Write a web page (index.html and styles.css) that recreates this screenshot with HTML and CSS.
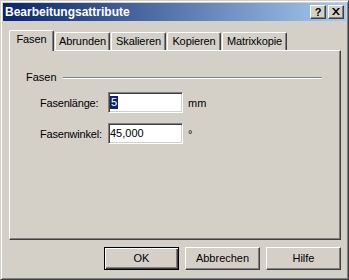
FILE: index.html
```html
<!DOCTYPE html>
<html lang="de">
<head>
<meta charset="utf-8">
<title>Bearbeitungsattribute</title>
<link rel="stylesheet" href="styles.css">
</head>
<body>
<div class="window">
  <div class="titlebar">
    <span class="title">Bearbeitungsattribute</span>
    <span class="tbtn help">?</span>
    <span class="tbtn close"><svg width="8" height="7" viewBox="0 0 8 7"><path d="M0 0h2l2 2.5L6 0h2L5 3.5 8 7H6L4 4.5 2 7H0l3-3.5z" fill="#000"/></svg></span>
  </div>
  <div class="tabs">
    <div class="tab active t1">Fasen</div>
    <div class="tab t2">Abrunden</div>
    <div class="tab t3">Skalieren</div>
    <div class="tab t4">Kopieren</div>
    <div class="tab t5">Matrixkopie</div>
  </div>
  <div class="panel">
    <div class="group">
      <span class="group-label">Fasen</span>
      <span class="group-line"></span>
    </div>
    <div class="form">
      <span class="lbl">Fasenlänge:</span>
      <div class="edit"><span class="sel">5</span></div>
      <span class="unit">mm</span>
      <span class="lbl">Fasenwinkel:</span>
      <div class="edit">45,000</div>
      <span class="unit">°</span>
    </div>
  </div>
  <div class="buttons">
    <div class="btn default"><span class="btn-inner">OK</span></div>
    <div class="btn"><span class="btn-inner">Abbrechen</span></div>
    <div class="btn"><span class="btn-inner">Hilfe</span></div>
  </div>
</div>
</body>
</html>
```
FILE: styles.css
```css
* { box-sizing: border-box; }
html, body { margin: 0; padding: 0; background: #d4d0c8; }
body {
  font-family: "Liberation Sans", Arial, sans-serif;
  font-size: 11px;
  color: #000;
}
.window {
  width: 349px;
  height: 280px;
  background: #d4d0c8;
  border: 1px solid;
  border-color: #d4d0c8 #404040 #404040 #d4d0c8;
  box-shadow: inset 1px 1px #ffffff, inset -1px -1px #808080;
  padding: 2px;
  display: flex;
  flex-direction: column;
}
.titlebar {
  height: 18px;
  background: linear-gradient(to right, #0a246a, #a6caf0);
  display: flex;
  align-items: center;
  padding-left: 2px;
  padding-right: 2px;
}
.title {
  flex: 1;
  color: #fff;
  font-weight: bold;
  font-size: 12px;
  line-height: 18px;
}
.tbtn {
  width: 16px;
  height: 14px;
  background: #d4d0c8;
  border: 1px solid;
  border-color: #fff #404040 #404040 #fff;
  box-shadow: inset -1px -1px #808080;
  display: flex;
  align-items: center;
  justify-content: center;
  font-weight: bold;
  font-size: 11px;
  line-height: 12px;
}
.tbtn.help { margin-right: 2px; padding-bottom: 1px; }
.tbtn.close svg { display: block; margin-top: -1px; }
.tabs {
  margin-top: 9px;
  margin-left: 6px;
  height: 20px;
  display: flex;
  align-items: flex-end;
  position: relative;
  z-index: 1;
}
.tab {
  height: 18px;
  border-top: 1px solid #fff;
  border-left: 1px solid #fff;
  border-right: 1px solid #404040;
  box-shadow: inset -1px 0 #808080;
  border-top-left-radius: 2px;
  border-top-right-radius: 2px;
  text-align: center;
  line-height: 13px;
  padding-top: 2px;
  margin-left: 1px;
  letter-spacing: -0.1px;
}
.tab.active {
  height: 21px;
  margin-bottom: -1px;
  margin-left: 0;
  background: #d4d0c8;
}
.t1 { width: 45px; }
.t2 { width: 55px; }
.t3 { width: 55px; }
.t4 { width: 54px; }
.t5 { width: 65px; }
.panel {
  margin-left: 6px;
  width: 332px;
  height: 190px;
  border: 1px solid;
  border-color: #fff #404040 #404040 #fff;
  box-shadow: inset -1px -1px #808080;
  padding-top: 20px;
}
.group {
  display: flex;
  align-items: center;
  margin-left: 16px;
  width: 296px;
  height: 13px;
}
.group-label { line-height: 13px; padding-right: 6px; }
.group-line {
  flex: 1;
  border-top: 1px solid #808080;
  border-bottom: 1px solid #fff;
  margin-top: 1px;
}
.form {
  margin-top: 8px;
  margin-left: 30px;
  display: grid;
  grid-template-columns: 68px 75px auto;
  column-gap: 0;
  row-gap: 10px;
  align-items: center;
}
.lbl { letter-spacing: -0.2px; }
.unit { padding-left: 5px; }
.edit {
  height: 21px;
  background: #fff;
  border: 1px solid;
  border-color: #808080 #fff #fff #808080;
  box-shadow: inset 1px 1px #404040, inset -1px -1px #d4d0c8;
  padding: 0 1px;
  display: flex;
  align-items: center;
  line-height: 13px;
}
.sel {
  background: #0a246a;
  color: #fff;
  padding: 0 1px;
}
.buttons {
  margin-top: 7px;
  display: flex;
  justify-content: flex-end;
  gap: 6px;
  padding-right: 5px;
}
.btn {
  width: 75px;
  height: 23px;
  border: 1px solid;
  border-color: #fff #404040 #404040 #fff;
  box-shadow: inset -1px -1px #808080;
  display: flex;
  align-items: center;
  justify-content: center;
  line-height: 13px;
}
.btn.default {
  border: 1px solid #000;
  box-shadow: inset 1px 1px #fff, inset -1px -1px #404040, inset -2px -2px #808080;
}
```
